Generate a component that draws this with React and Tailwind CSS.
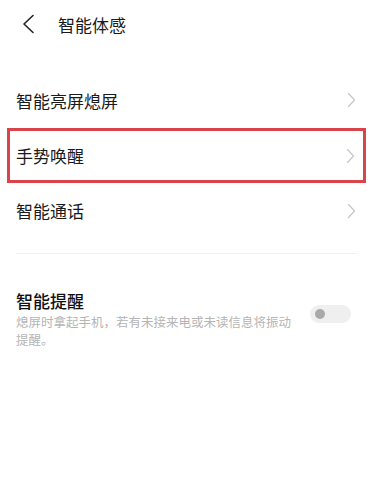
import React from 'react';

const Chevron = () => (
  <svg width="9" height="16" viewBox="0 0 9 16" fill="none">
    <path d="M1.5 1.5 L7.5 8 L1.5 14.5" stroke="#c8c8c8" strokeWidth="1.3" strokeLinecap="round" strokeLinejoin="round" />
  </svg>
);

const Row = ({ label, boxed }) => (
  <div className={`h-[55px] flex items-center ${boxed ? 'mx-[7px] pl-[6px] pr-[8px] border-[3px] border-[#d9434a]' : 'pl-[16px] pr-[17px]'}`}>
    <span className="flex-1 text-[17px] text-[#1a1a1a] leading-none">{label}</span>
    <Chevron />
  </div>
);

export default function App() {
  return (
    <div className="w-[373px] h-[487px] bg-white" style={{ fontFamily: '"Noto Sans CJK SC", "Noto Sans", sans-serif' }}>
      <div className="flex items-center h-[48px] pl-[22px]">
        <svg width="13" height="20" viewBox="0 0 13 20" fill="none">
          <path d="M11 1.5 L2 10 L11 18.5" stroke="#222" strokeWidth="1.6" strokeLinecap="round" strokeLinejoin="round" />
        </svg>
        <span className="ml-[23px] text-[17px] text-[#1a1a1a] leading-none">智能体感</span>
      </div>

      <div className="mt-[24px]">
        <div className="h-[56px] flex items-center pl-[16px] pr-[17px]">
          <span className="flex-1 text-[17px] text-[#1a1a1a] leading-none">智能亮屏熄屏</span>
          <Chevron />
        </div>
        <Row label="手势唤醒" boxed />
        <Row label="智能通话" />
      </div>

      <div className="mx-[16px] mt-[15px] border-t border-[#f0f0f0]" />

      <div className="flex items-start pl-[16px] pr-[22px] pt-[36px]">
        <div className="w-[286px]">
          <div className="text-[17px] text-[#111] font-medium leading-[22px]">智能提醒</div>
          <div className="mt-[1px] text-[12.5px] text-[#b5b5b5] leading-[18px] whitespace-nowrap">
            <div>熄屏时拿起手机，若有未接来电或未读信息将振动</div>
            <div>提醒。</div>
          </div>
        </div>
        <div className="mt-[15px] ml-auto w-[41px] h-[18px] rounded-full bg-[#efefef] flex items-center pl-[5px]">
          <div className="w-[10px] h-[10px] rounded-full bg-[#a9a9a9]" />
        </div>
      </div>
    </div>
  );
}
